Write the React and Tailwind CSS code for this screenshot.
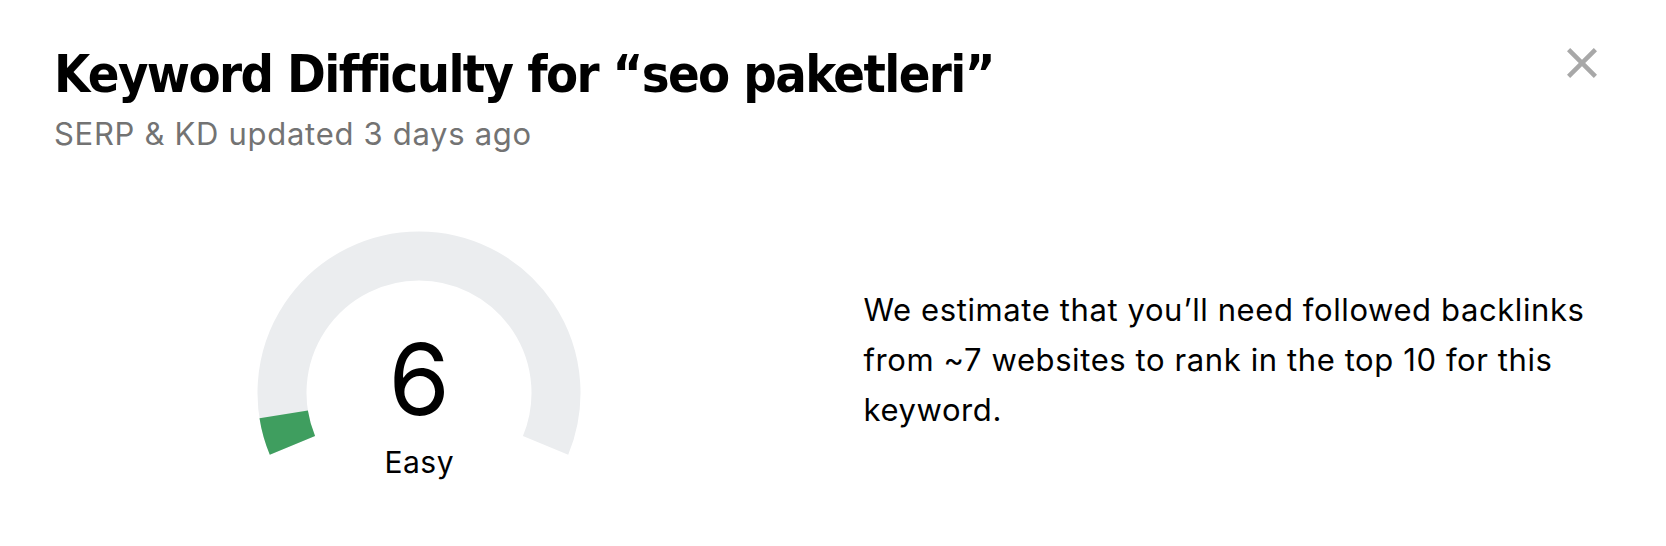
import React from 'react';

const polar = (cx, cy, r, deg) => {
  const a = (deg * Math.PI) / 180;
  return [cx + r * Math.cos(a), cy - r * Math.sin(a)];
};

const arc = (cx, cy, r, from, to) => {
  const [x1, y1] = polar(cx, cy, r, from);
  const [x2, y2] = polar(cx, cy, r, to);
  const large = from - to > 180 ? 1 : 0;
  return `M ${x1} ${y1} A ${r} ${r} 0 ${large} 1 ${x2} ${y2}`;
};

function Gauge({ value, label }) {
  const start = 202.5;
  const span = 225;
  const end = start - span;
  const fill = start - (span * value) / 100;

  return (
    <div className="relative w-[324px] h-[226px]">
      <svg width="324" height="226" viewBox="0 0 324 226">
        <path d={arc(162, 162, 137, start, end)} fill="none" stroke="#ebedef" strokeWidth="49" />
        <path d={arc(162, 162, 137, start, fill)} fill="none" stroke="#3f9e5f" strokeWidth="49" />
      </svg>
      <div className="absolute left-0 right-0 top-[99px] text-center text-[99px] leading-none text-black">
        {value}
      </div>
      <div className="absolute left-0 right-0 top-[216px] text-center text-[30px] leading-none tracking-[0.5px] text-black">
        {label}
      </div>
    </div>
  );
}

export default function App() {
  return (
    <div className="w-[1666px] h-[546px] bg-white pt-[48px] pl-[54px] pr-[69px] font-['Inter',sans-serif]">
      <div className="flex justify-between items-start">
        <div>
          <h1 className="text-[52px] leading-none font-bold tracking-[-1.6px] text-black font-['Liberation_Sans_Narrow','DejaVu_Sans_Condensed','Roboto',sans-serif]">
            Keyword Difficulty for “seo paketleri”
          </h1>
          <p className="mt-[18px] text-[31px] leading-none tracking-[0.7px] text-[#737373]">SERP &amp; KD updated 3 days ago</p>
        </div>
        <button className="w-[30px] h-[30px] shrink-0">
          <svg width="30" height="30" viewBox="0 0 30 30">
            <path d="M1.6 1.6 L28.4 28.4 M28.4 1.6 L1.6 28.4" stroke="#a8a8a8" strokeWidth="4.5" fill="none" />
          </svg>
        </button>
      </div>

      <div className="mt-[82px] flex items-start gap-[79px]">
        <div className="w-[732px] flex justify-center">
          <Gauge value={6} label="Easy" />
        </div>
        <p className="mt-[54px] w-[735px] text-[31px] leading-[50px] tracking-[0.6px] text-black">
          We estimate that you’ll need followed backlinks from ~7 websites to rank in the top 10 for this keyword.
        </p>
      </div>
    </div>
  );
}
